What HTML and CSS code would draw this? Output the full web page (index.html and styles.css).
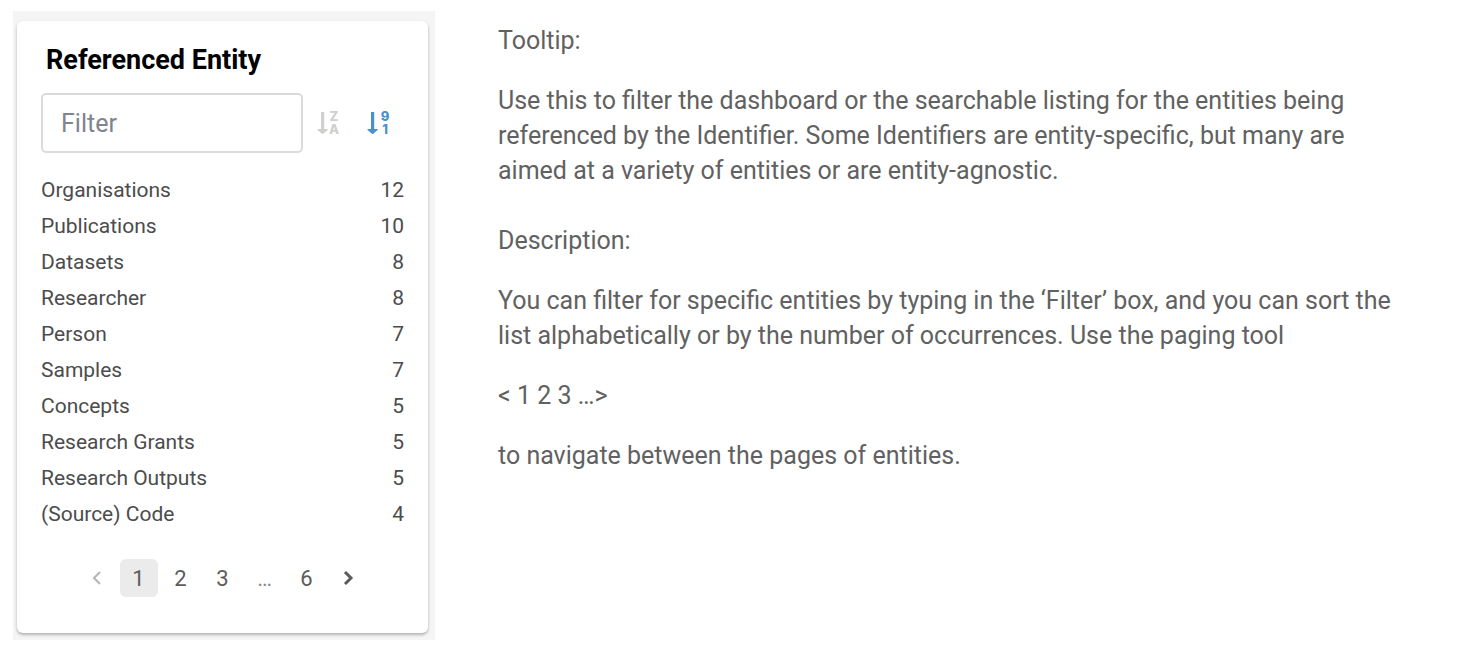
FILE: index.html
```html
<!DOCTYPE html>
<html lang="en">
<head>
<meta charset="utf-8">
<meta name="viewport" content="width=device-width, initial-scale=1">
<title>Referenced Entity</title>
<link rel="stylesheet" href="styles.css">
</head>
<body>
<main class="page">
  <div class="panel">
    <section class="card" aria-labelledby="card-title">
      <h2 class="card-title" id="card-title">Referenced Entity</h2>
      <div class="toolbar">
        <input class="filter" type="text" placeholder="Filter" aria-label="Filter">
        <button class="sort" type="button" aria-label="Sort alphabetically">
          <svg class="sort-icon" viewBox="0 -4 24 32" aria-hidden="true">
            <path d="M4 1h3.200v17h3.300q.6.300.1.900L6.200 22.800q-.6.500-1.200 0L.6 18.900q-.5-.6.100-.9H4z"/>
            <text x="17" y="10">Z</text>
            <text x="17" y="23">A</text>
          </svg>
        </button>
        <button class="sort sort-active" type="button" aria-label="Sort by number of occurrences">
          <svg class="sort-icon" viewBox="0 -4 24 32" aria-hidden="true">
            <path d="M4 1h3.200v17h3.300q.6.300.1.900L6.200 22.800q-.6.500-1.200 0L.6 18.900q-.5-.6.100-.9H4z"/>
            <text x="18" y="10">9</text>
            <text x="18" y="23">1</text>
          </svg>
        </button>
      </div>
      <ul class="list">
        <li class="row"><span>Organisations</span><span>12</span></li>
        <li class="row"><span>Publications</span><span>10</span></li>
        <li class="row"><span>Datasets</span><span>8</span></li>
        <li class="row"><span>Researcher</span><span>8</span></li>
        <li class="row"><span>Person</span><span>7</span></li>
        <li class="row"><span>Samples</span><span>7</span></li>
        <li class="row"><span>Concepts</span><span>5</span></li>
        <li class="row"><span>Research Grants</span><span>5</span></li>
        <li class="row"><span>Research Outputs</span><span>5</span></li>
        <li class="row"><span>(Source) Code</span><span>4</span></li>
      </ul>
      <nav class="pager" aria-label="Pages">
        <button class="page-btn" type="button" aria-label="Previous page" disabled>
          <svg class="chevron" viewBox="0 0 16 16" aria-hidden="true"><path d="M11 2 5 8l6 6"/></svg>
        </button>
        <button class="page-btn page-current" type="button" aria-current="page">1</button>
        <button class="page-btn" type="button">2</button>
        <button class="page-btn" type="button">3</button>
        <span class="page-btn page-more">…</span>
        <button class="page-btn" type="button">6</button>
        <button class="page-btn" type="button" aria-label="Next page">
          <svg class="chevron chevron-next" viewBox="0 0 16 16" aria-hidden="true"><path d="M4 2l6 6-6 6"/></svg>
        </button>
      </nav>
    </section>
  </div>
  <div class="notes">
    <section class="note">
      <p>Tooltip:</p>
      <p>Use this to filter the dashboard or the searchable listing for the entities being referenced by the Identifier. Some Identifiers are entity-specific, but many are aimed at a variety of entities or are entity-agnostic.</p>
    </section>
    <section class="note">
      <p>Description:</p>
      <p>You can filter for specific entities by typing in the ‘Filter’ box, and you can sort the list alphabetically or by the number of occurrences. Use the paging tool</p>
      <p>&lt; 1 2 3 …&gt;</p>
      <p>to navigate between the pages of entities.</p>
    </section>
  </div>
</main>
</body>
</html>
```
FILE: styles.css
```css
* {
  box-sizing: border-box;
}

body {
  margin: 0;
  background: #fff;
  color: #616161;
  font-family: Roboto, "Liberation Sans", sans-serif;
}

h2, p, ul {
  margin: 0;
  padding: 0;
}

button, input {
  font: inherit;
}

.page {
  display: grid;
  grid-template-columns: minmax(360px, 422px) 1fr;
  align-items: start;
  gap: 63px;
  padding: 11px 60px 12px 13px;
}

.panel {
  padding: 10px 7px 7px 4px;
  background: #f5f5f5;
}

.card {
  padding: 23px 24px 36px;
  border-radius: 6px;
  background: #fff;
  box-shadow: 0 2px 3px rgba(0, 0, 0, 0.25), 0 0 4px rgba(0, 0, 0, 0.04);
}

.card-title {
  padding-left: 5px;
  color: #000;
  font-size: 27px;
  font-weight: 700;
  line-height: 32px;
}

.toolbar {
  display: flex;
  align-items: center;
  padding: 17px 13px 0 0;
}

.filter {
  flex: 1;
  min-width: 0;
  height: 60px;
  margin-right: 14px;
  padding: 0 18px;
  border: 2px solid #dadada;
  border-radius: 5px;
  background: #fff;
  color: #424242;
  font-size: 25px;
}

.filter::placeholder {
  color: #80848f;
  opacity: 1;
}

.sort {
  display: flex;
  padding: 0;
  border: 0;
  background: none;
  color: #cfcfcf;
}

.sort + .sort {
  margin-left: 26px;
}

.sort-active {
  color: #4a90cb;
}

.sort-icon {
  width: 24px;
  height: 32px;
  fill: currentColor;
  font-family: Inter, "Liberation Sans", sans-serif;
  font-size: 13px;
  font-weight: 800;
  text-anchor: middle;
}

.list {
  padding-top: 19px;
  list-style: none;
  color: #4c4c4c;
  font-size: 21px;
  line-height: 36px;
}

.row {
  display: flex;
  justify-content: space-between;
}

.pager {
  display: flex;
  justify-content: center;
  gap: 4px;
  padding-top: 27px;
}

.page-btn {
  display: flex;
  align-items: center;
  justify-content: center;
  width: 38px;
  height: 38px;
  padding: 0;
  border: 0;
  border-radius: 6px;
  background: none;
  color: #5c5c5c;
  font-size: 22px;
}

.page-btn:disabled {
  color: #b5b5b5;
}

.page-current {
  background: #ebebeb;
}

.page-more {
  color: #8a8a8a;
}

.chevron {
  width: 16px;
  height: 16px;
  fill: none;
  stroke: currentColor;
  stroke-width: 2;
}

.chevron-next {
  stroke-width: 3;
}

.notes {
  display: grid;
  gap: 35px;
  padding-top: 12px;
  font-size: 25px;
  line-height: 35px;
}

.note {
  display: grid;
  gap: 25px;
}
```
